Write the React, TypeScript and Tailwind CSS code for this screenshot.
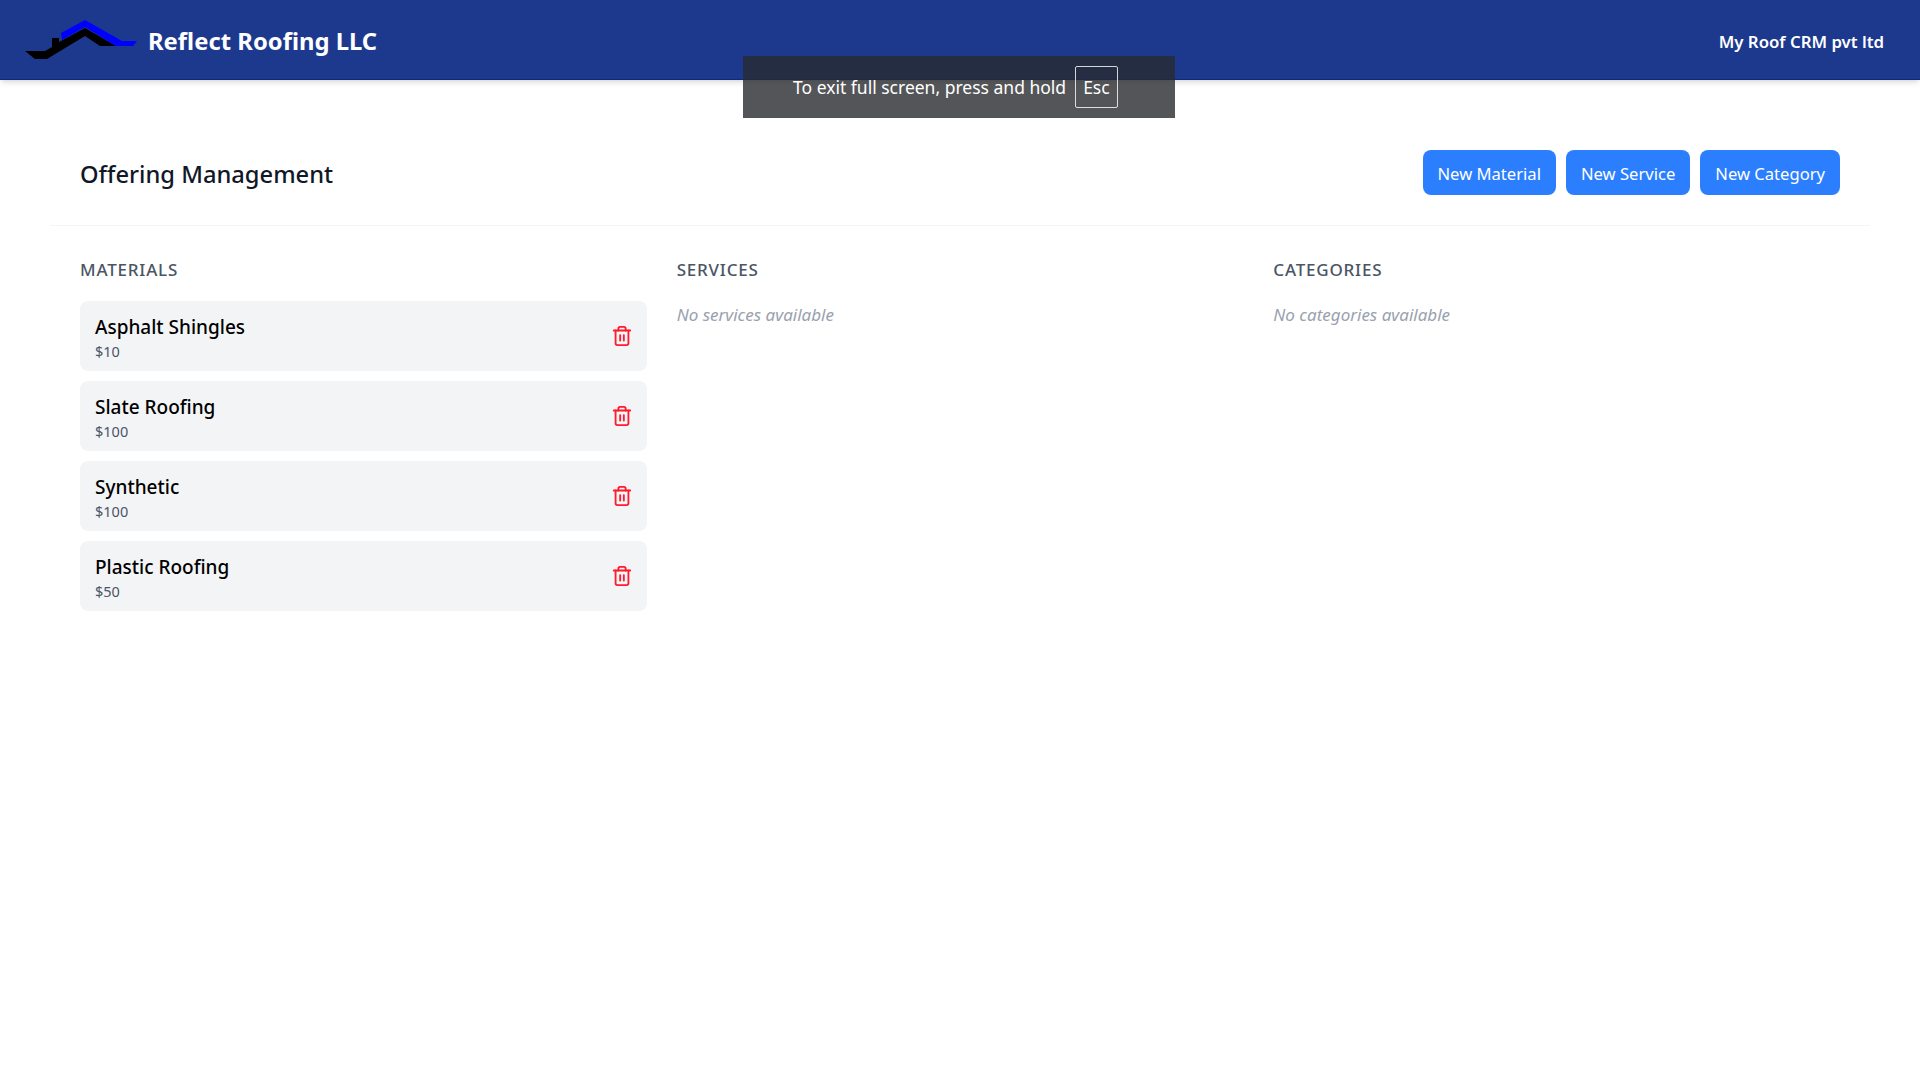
import { Trash2 } from "lucide-react";

const materials = [
  { name: "Asphalt Shingles", price: "$10" },
  { name: "Slate Roofing", price: "$100" },
  { name: "Synthetic", price: "$100" },
  { name: "Plastic Roofing", price: "$50" },
];

function Logo() {
  return (
    <svg width="112" height="40" viewBox="0 0 112 40" className="shrink-0">
      <path d="M0 31L20 31L27 27L27 18L34 18L34 22L60 8L91 26L75 26L60 16L22 39L10 39Z" fill="#000" />
      <path d="M36 13L60 0L97 21L112 21L108 26L91 26L60 7L37 20Z" fill="#0000ff" />
    </svg>
  );
}

function NewButton({ label }: { label: string }) {
  return (
    <button className="h-[45px] px-[15px] pt-[3px] rounded-lg bg-blue-500 text-white text-[16.6px]">{label}</button>
  );
}

function ColumnTitle({ label }: { label: string }) {
  return (
    <h2 className="pt-[1px] mb-[18px] text-[17px] leading-[26px] font-medium tracking-[0.8px] uppercase text-gray-600">
      {label}
    </h2>
  );
}

export default function App() {
  return (
    <div className="relative min-h-[1080px] bg-white font-['Noto_Sans',sans-serif] text-black">
      <header className="h-20 pl-[25px] pr-[36px] flex items-center justify-between bg-blue-900 border-b border-[#10297f] text-white shadow-md">
        <div className="flex items-center gap-[11px]">
          <Logo />
          <span className="pt-[5px] text-[23.8px] font-bold">Reflect Roofing LLC</span>
        </div>
        <span className="pt-[5px] text-[16.8px] font-semibold">My Roof CRM pvt ltd</span>
      </header>

      <div className="absolute left-[743px] top-[56px] w-[432px] h-[62px] pl-[50px] flex items-center gap-[9px] bg-[#282b30]/80 text-white text-[17.5px]">
        <span>To exit full screen, press and hold</span>
        <span className="h-[42px] px-[7px] flex items-center rounded-[2px] border border-white/80">Esc</span>
      </div>

      <main className="mx-[50px] pt-[70px]">
        <div className="px-[30px] pb-[30px] flex items-center justify-between border-b border-gray-100">
          <h1 className="pt-[5px] text-[23.7px] font-medium text-gray-900">Offering Management</h1>
          <div className="flex gap-[10px]">
            <NewButton label="New Material" />
            <NewButton label="New Service" />
            <NewButton label="New Category" />
          </div>
        </div>

        <div className="px-[30px] pt-[30px] grid grid-cols-3 gap-[30px]">
          <section>
            <ColumnTitle label="Materials" />
            <div className="flex flex-col gap-[10px]">
              {materials.map((m) => (
                <div key={m.name} className="h-[70px] pl-[15px] pr-[14px] flex items-center justify-between rounded-lg bg-gray-100">
                  <div className="pt-[2px]">
                    <div className="text-[19px] leading-[28px] font-medium">{m.name}</div>
                    <div className="text-[14.5px] leading-[20px] text-gray-600">{m.price}</div>
                  </div>
                  <Trash2 size={22} className="text-[#ff1a2e]" />
                </div>
              ))}
            </div>
          </section>
          <section>
            <ColumnTitle label="Services" />
            <p className="text-[17px] leading-[28px] italic text-gray-400">No services available</p>
          </section>
          <section>
            <ColumnTitle label="Categories" />
            <p className="text-[17px] leading-[28px] italic text-gray-400">No categories available</p>
          </section>
        </div>
      </main>
    </div>
  );
}
